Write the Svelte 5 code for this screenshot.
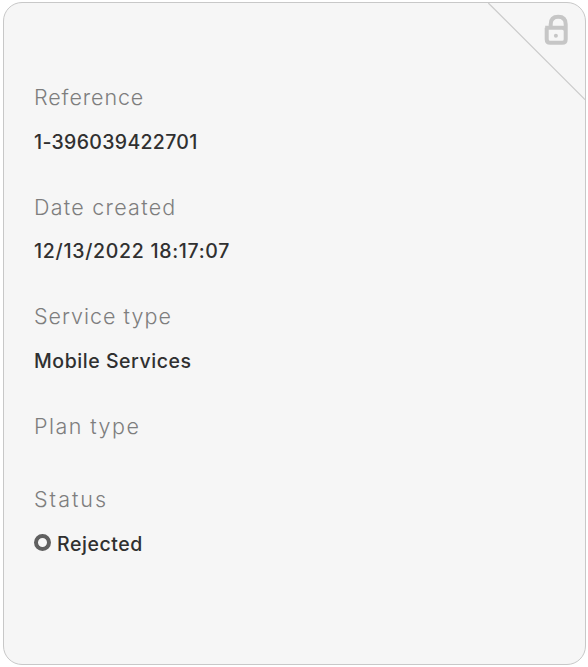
<script>
  const fields = [
    { key: 'reference', label: 'Reference', value: '1-396039422701' },
    { key: 'created', label: 'Date created', value: '12/13/2022 18:17:07' },
    { key: 'service', label: 'Service type', value: 'Mobile Services' },
    { key: 'plan', label: 'Plan type', value: '' },
    { key: 'status', label: 'Status', value: 'Rejected', status: true }
  ];
</script>

<main>
  <article class="card">
    <svg class="corner" viewBox="0 0 98 98" aria-hidden="true">
      <path class="fold" d="M1.3 0 L98 96.7" />
      <g transform="translate(1.2 0.3)">
        <path class="lock" d="M57 24.5 H74 Q77.5 24.5 77.5 28 V36 Q77.5 39.5 74 39.5 H62 Q58.5 39.5 58.5 36 V24.5 M62.5 24 V21 Q62.5 13.5 70 13.5 Q77.5 13.5 77.5 21 V28" />
        <circle class="keyhole" cx="67.7" cy="32.5" r="2" />
      </g>
    </svg>

    <dl>
      {#each fields as field}
        <div class="field {field.key}">
          <dt>{field.label}</dt>
          {#if field.value}
            <dd>
              {#if field.status}
                <i class="status-dot"></i>
              {/if}
              <span>{field.value}</span>
            </dd>
          {/if}
        </div>
      {/each}
    </dl>
  </article>
</main>

<style>
  :global(body) {
    margin: 0;
    background: #fff;
  }

  main {
    height: 667px;
    padding: 2px 2px 2px 3px;
    box-sizing: border-box;
    font-family: Inter, "Liberation Sans", sans-serif;
  }

  .card {
    position: relative;
    height: 663px;
    padding: 76px 30px 0;
    box-sizing: border-box;
    border: 1px solid #c8c8c8;
    border-radius: 19px;
    background: #f6f6f6;
    overflow: hidden;
  }

  .corner {
    position: absolute;
    top: 0;
    right: 0;
    width: 98px;
    height: 98px;
    fill: none;
  }

  .fold {
    stroke: #cbcbcb;
    stroke-width: 1.2;
  }

  .lock {
    stroke: #c6c6c6;
    stroke-width: 4;
    stroke-linejoin: round;
  }

  .keyhole {
    fill: #c6c6c6;
  }

  dl {
    margin: 0;
  }

  .field {
    padding-bottom: 36.5px;
  }

  dt,
  dd {
    display: flex;
    align-items: center;
    margin: 0;
    white-space: nowrap;
  }

  dt {
    height: 36.5px;
    color: #7e7e7e;
    font-size: 21.5px;
    font-weight: 300;
  }

  dd {
    height: 36.5px;
    padding-top: 8px;
    margin-bottom: -8px;
    color: #303030;
    font-size: 19.5px;
    font-weight: 500;
  }

  /* tracking for each row's label and value */
  .reference dt {
    letter-spacing: 0.9px;
  }

  .reference dd {
    letter-spacing: 0.32px;
  }

  .created dt {
    letter-spacing: 1.25px;
  }

  .created dd {
    letter-spacing: 0.7px;
  }

  .service dt {
    letter-spacing: 1px;
  }

  .service dd {
    letter-spacing: 0.55px;
  }

  .plan dt {
    letter-spacing: 1.45px;
  }

  .status dt {
    letter-spacing: 2px;
  }

  .status dd {
    padding-top: 9px;
    letter-spacing: 0.55px;
  }

  .status-dot {
    width: 17px;
    height: 17px;
    margin: 0 6px 4px 0;
    box-sizing: border-box;
    border: 4px solid #606060;
    border-radius: 50%;
  }
</style>
